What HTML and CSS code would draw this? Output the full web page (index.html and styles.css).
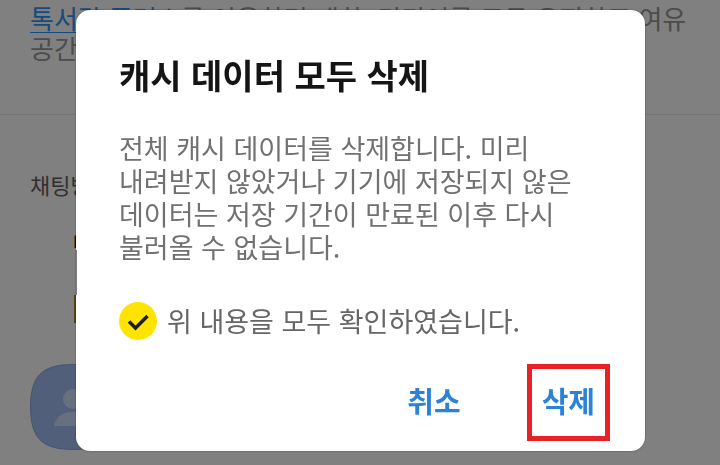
FILE: index.html
```html
<!DOCTYPE html>
<html lang="ko">
<head>
  <meta charset="UTF-8">
  <meta name="viewport" content="width=device-width, initial-scale=1.0">
  <title>캐시 데이터 모두 삭제</title>
  <link rel="stylesheet" href="styles.css">
</head>
<body>
  <!-- Settings page, dimmed -->
  <main class="page">
    <p class="notice"><a href="#">톡서랍 플러스</a>를 이용하면 대화, 미디어를 모두 유지하고 여유<br>공간</p>
    <section class="rooms">
      <h2>채팅방</h2>
      <div class="tabs">
        <span class="tab">내</span>
        <span class="tab-line"></span>
      </div>
      <svg class="avatar" viewBox="0 0 86 86" aria-hidden="true">
        <path d="M43 .5C12 .5 .5 12 .5 43S12 85.500 43 85.500 85.500 74 85.500 43 74 .5 43 .5Z" fill="#525f7b" stroke="#475471"/>
        <circle cx="43" cy="35" r="10" fill="#687080"/>
        <path d="M24 62C26 52 33 48 43 48S60 52 62 62Z" fill="#687080"/>
      </svg>
    </section>
  </main>

  <div class="overlay">
    <div class="dialog" role="dialog" aria-labelledby="dialog-title">
      <h1 id="dialog-title">캐시 데이터 모두 삭제</h1>
      <p class="message">전체 캐시 데이터를 삭제합니다. 미리<br>내려받지 않았거나 기기에 저장되지 않은<br>데이터는 저장 기간이 만료된 이후 다시<br>불러올 수 없습니다.</p>
      <label class="confirm" for="agree">
        <span class="check">
          <input type="checkbox" id="agree" checked>
          <svg viewBox="0 0 38 38" aria-hidden="true"><path d="M10 19.500 16.500 26 28.500 14" fill="none" stroke="#1c1b18" stroke-width="3.500"/></svg>
        </span>
        위 내용을 모두 확인하였습니다.
      </label>
      <div class="actions">
        <button type="button">취소</button>
        <button type="button" class="marked">삭제</button>
      </div>
      <span class="notch"></span>
    </div>
  </div>
</body>
</html>
```

FILE: styles.css
```css
* {
  box-sizing: border-box;
}

body {
  margin: 0;
  min-height: 100vh;
  overflow: hidden;
  background: #808080;
  color: #4c4c4c;
  font-family: "Noto Sans CJK KR", sans-serif;
}

h1, h2, p {
  margin: 0;
  font-weight: 400;
}

/* page behind the dialog */
.page {
  height: 100vh;
  overflow: hidden;
}

.notice {
  height: 115px;
  padding: 3px 0 0 30px;
  border-bottom: 1px solid #757575;
  font-size: 26px;
  line-height: 30px;
  white-space: nowrap;
}

.notice a {
  color: #174a7c;
  text-underline-offset: 3px;
  text-decoration-thickness: 1px;
}

.rooms {
  padding: 54px 0 0 30px;
}

.rooms h2 {
  color: #303030;
  font-size: 22px;
  line-height: 30px;
}

.tabs {
  display: flex;
  flex-direction: column;
  gap: 36px;
  padding: 28px 0 41px 43px;
}

.tab {
  color: #111;
  font-size: 20px;
  line-height: 32px;
  font-weight: 700;
}

.tab-line {
  width: 30px;
  height: 28px;
  margin-left: 1px;
  background: #54440c;
}

.avatar {
  display: block;
  width: 86px;
}

/* dialog */
.overlay {
  position: fixed;
  inset: 0;
  padding: 10px 75px 0 76px;
}

.dialog {
  position: relative;
  padding: 42px 35px 10px 43px;
  border-radius: 14px;
  background: #fff;
  box-shadow: 0 0 2px rgba(0, 0, 0, .4);
}

.dialog h1 {
  color: #151515;
  font-size: 34px;
  line-height: 46px;
  font-weight: 700;
}

.message {
  margin-top: 33px;
  color: #717171;
  font-size: 27px;
  line-height: 33px;
  white-space: nowrap;
}

.confirm {
  display: flex;
  align-items: center;
  gap: 10px;
  margin-top: 39px;
  color: #666;
  font-size: 27px;
  line-height: 38px;
}

.check {
  display: grid;
  width: 38px;
  height: 38px;
}

.check > * {
  grid-area: 1 / 1;
  width: 38px;
  height: 38px;
  margin: 0;
}

.check input {
  appearance: none;
  border-radius: 50%;
  background: #ccc;
}

.check input:checked {
  background: #ffe400;
}

.check svg {
  pointer-events: none;
}

.actions {
  display: flex;
  justify-content: flex-end;
  gap: 56px;
  margin-top: 24px;
}

.actions button {
  height: 77px;
  padding: 0 10px 5px;
  border: 0;
  background: none;
  color: #2c83d6;
  font: 700 29px/34px "Noto Sans CJK KR", sans-serif;
}

.actions .marked {
  border: 5px solid #e82127;
}

.notch {
  position: absolute;
  top: 240px;
  left: 0;
  width: 1px;
  height: 45px;
  background: #808080;
}
```
